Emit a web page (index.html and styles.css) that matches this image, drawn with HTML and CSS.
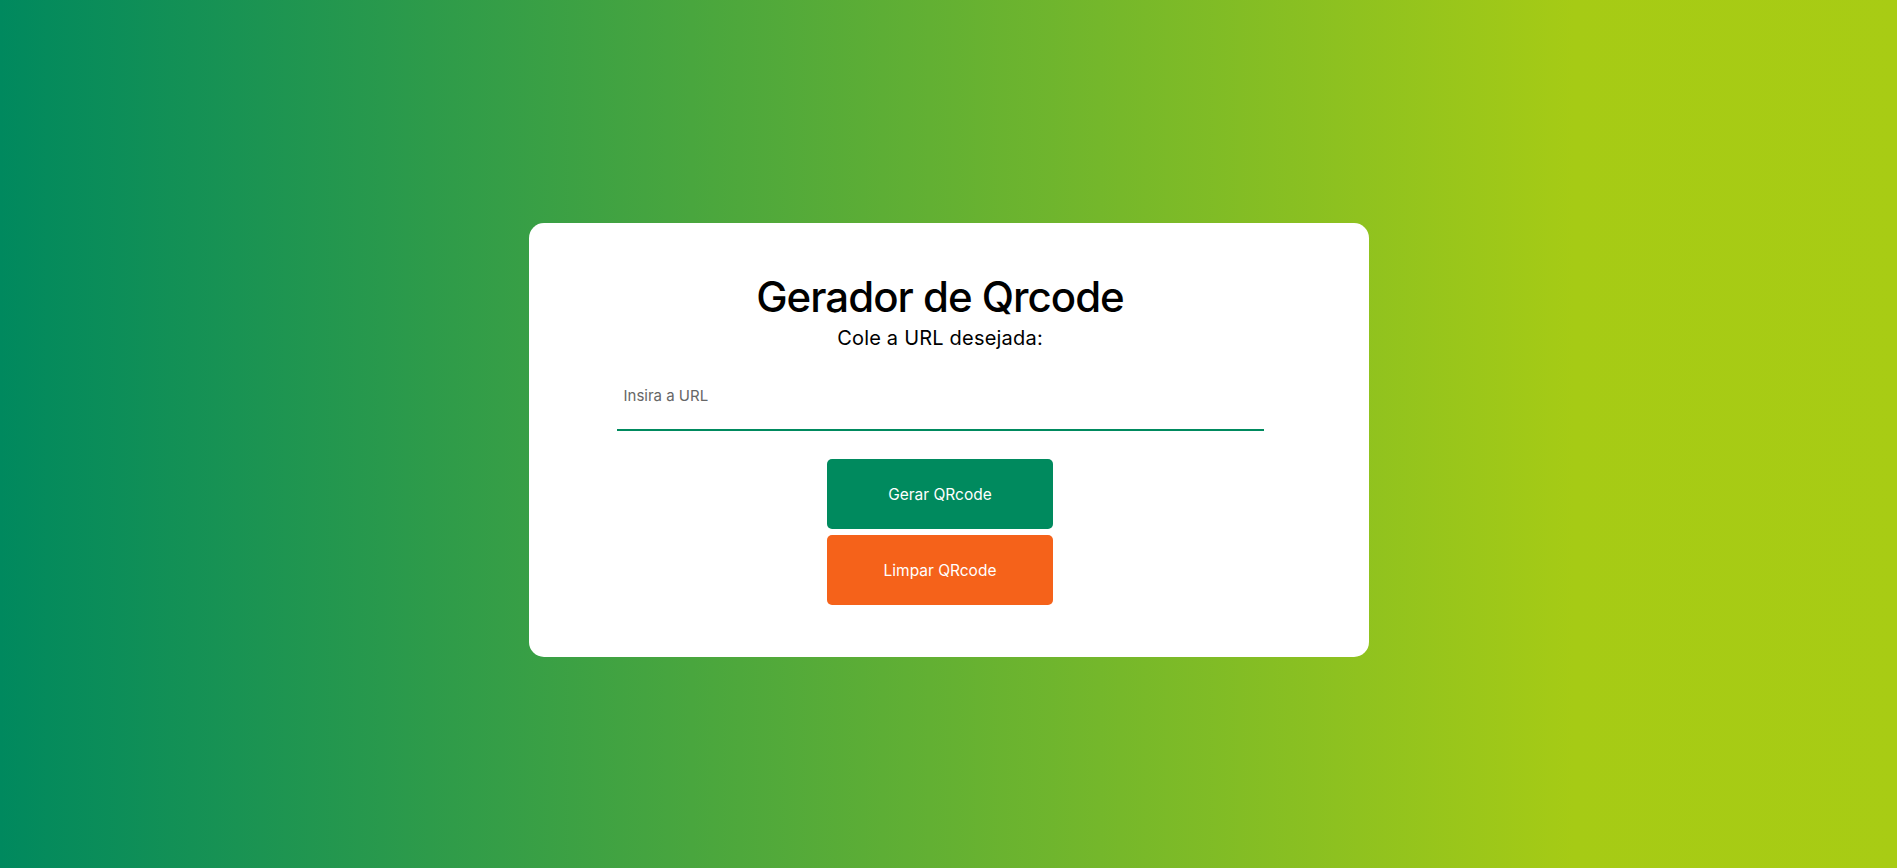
FILE: index.html
```html
<!DOCTYPE html>
<html lang="pt-BR">
<head>
<meta charset="UTF-8">
<title>Gerador de Qrcode</title>
<link rel="stylesheet" href="styles.css">
</head>
<body>
<main class="page">
  <section class="card">
    <h1 class="title">Gerador de Qrcode</h1>
    <p class="subtitle">Cole a URL desejada:</p>
    <input class="url-input" type="text" placeholder="Insira a URL">
    <div class="actions">
      <button class="btn btn-generate" type="button">Gerar QRcode</button>
      <button class="btn btn-clear" type="button">Limpar QRcode</button>
    </div>
  </section>
</main>
</body>
</html>
```
FILE: styles.css
```css
* { box-sizing: border-box; }
html, body { margin: 0; padding: 0; height: 100%; }
body {
  font-family: Inter, "Noto Sans", Arial, sans-serif;
  background: linear-gradient(90deg, #00895e 0%, #a6cb15 83%, #a8cc14 100%);
}
.page {
  height: 100vh;
  padding-top: 12px;
  display: flex;
  align-items: center;
  justify-content: center;
}
.card {
  width: 840px;
  height: 434px;
  background: #ffffff;
  border-radius: 15px;
  display: flex;
  flex-direction: column;
  align-items: center;
  padding: 46px 17px 0 0;
}
.title {
  margin: 0;
  font-size: 42px;
  font-weight: 550;
  line-height: 56px;
  letter-spacing: -1px;
  color: #000;
}
.subtitle {
  margin: 0;
  font-size: 20px;
  line-height: 26px;
  letter-spacing: 0.2px;
  color: #000;
}
.url-input {
  margin-top: 22px;
  width: 647px;
  height: 58px;
  border: none;
  border-bottom: 2px solid #008a5e;
  padding: 0 0 12px 7px;
  font-family: inherit;
  font-size: 15px;
  outline: none;
  background: transparent;
}
.url-input::placeholder { color: #666; }
.actions {
  margin-top: 28px;
  display: flex;
  flex-direction: column;
  gap: 6px;
}
.btn {
  width: 226px;
  height: 70px;
  border: none;
  border-radius: 5px;
  color: #fff;
  font-family: inherit;
  font-size: 15.5px;
  cursor: pointer;
}
.btn-generate { background: #008a5e; }
.btn-clear { background: #f5621a; }
```
